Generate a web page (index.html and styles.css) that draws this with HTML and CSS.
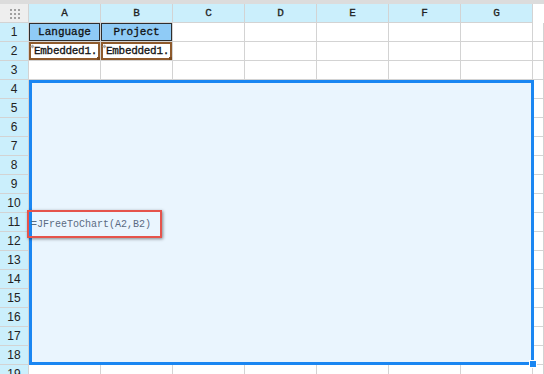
FILE: index.html
```html
<!DOCTYPE html>
<html lang="en">
<head>
    <meta charset="UTF-8">
    <title>Sheet</title>
    <link rel="stylesheet" href="styles.css">
</head>
<body>
    <div class="topbar"></div>
    <div class="sheet">
        <div class="corner">
            <svg width="10" height="10" viewBox="0 0 10 10">
                <g fill="#a0a0a0">
                    <rect x="0" y="0" width="2" height="2"/><rect x="4" y="0" width="2" height="2"/><rect x="8" y="0" width="2" height="2"/>
                    <rect x="0" y="4" width="2" height="2"/><rect x="4" y="4" width="2" height="2"/><rect x="8" y="4" width="2" height="2"/>
                    <rect x="0" y="8" width="2" height="2"/><rect x="4" y="8" width="2" height="2"/><rect x="8" y="8" width="2" height="2"/>
                </g>
            </svg>
        </div>
        <div class="col-head">A</div>
        <div class="col-head">B</div>
        <div class="col-head">C</div>
        <div class="col-head">D</div>
        <div class="col-head">E</div>
        <div class="col-head">F</div>
        <div class="col-head">G</div>
        <div class="blank"></div>

        <div class="row-head">1</div>
        <div class="cell title">Language</div>
        <div class="cell title">Project</div>
        <div class="cell"></div><div class="cell"></div><div class="cell"></div><div class="cell"></div><div class="cell"></div><div class="cell"></div>

        <div class="row-head">2</div>
        <div class="cell embed">Embedded1.</div>
        <div class="cell embed">Embedded1.</div>
        <div class="cell"></div><div class="cell"></div><div class="cell"></div><div class="cell"></div><div class="cell"></div><div class="cell"></div>
    </div>
    <div class="sheet" id="rows"></div>

    <div class="selection"><span class="handle"></span></div>
    <div class="formula">=JFreeToChart(A2,B2)</div>

    <script src="script.js"></script>
</body>
</html>
```

FILE: script.js
```js
var rows = document.getElementById('rows');
for (var r = 3; r <= 19; r++) {
    var html = '<div class="row-head">' + r + '</div>';
    for (var c = 0; c < 8; c++) html += '<div class="cell"></div>';
    rows.insertAdjacentHTML('beforeend', html);
}
```

FILE: styles.css
```css
body {
    margin: 0;
    width: 544px;
    height: 374px;
    overflow: hidden;
    background: #fff;
    position: relative;
    font-family: "Liberation Mono", monospace;
}
.topbar {
    height: 4px;
    background: #dcdcdc;
}
.sheet {
    display: grid;
    grid-template-columns: 29px repeat(7, 72px) 1fr;
    grid-auto-rows: 19px;
}
.sheet > div {
    box-sizing: border-box;
    border-right: 1px solid #d3d3d3;
    border-bottom: 1px solid #d3d3d3;
}
.corner {
    background: #eeeeee;
    display: flex;
    align-items: center;
    justify-content: center;
    padding-left: 2px;
    padding-top: 2px;
}
.col-head {
    background: #cbeffc;
    font-size: 11px;
    color: #222;
    display: flex;
    align-items: center;
    justify-content: center;
    -webkit-text-stroke: 0.3px #222;
}
.sheet > .blank {
    border: none;
}
.row-head {
    background: #cbeffc;
    font-family: "Liberation Sans", Arial, sans-serif;
    font-size: 12px;
    color: #222;
    display: flex;
    align-items: center;
    justify-content: center;
}
.cell {
    font-size: 11px;
    color: #111;
    display: flex;
    align-items: center;
    justify-content: center;
    position: relative;
}
.title {
    background: #8fcbf6;
    box-shadow: inset 0 0 0 1px #2e2e2e;
    -webkit-text-stroke: 0.3px #111;
}
.embed {
    box-shadow: inset 0 0 0 2px #8e5a2c;
    justify-content: flex-start;
    padding-left: 5px;
    letter-spacing: -0.3px;
    -webkit-text-stroke: 0.3px #111;
}
.embed::before {
    content: "";
    position: absolute;
    left: 2px;
    top: 3px;
    width: 3px;
    height: 3px;
    background: #a8a8a8;
    transform: rotate(45deg);
}
.embed::after {
    content: "";
    position: absolute;
    right: 0;
    bottom: 0;
    width: 3px;
    height: 3px;
    background: #7a4a20;
}
.selection {
    position: absolute;
    left: 29px;
    top: 80px;
    width: 505px;
    height: 285px;
    box-sizing: border-box;
    border: 3px solid #1a86f2;
    background: #eaf5fe;
}
.handle {
    position: absolute;
    right: -6px;
    bottom: -6px;
    width: 6px;
    height: 6px;
    background: #1a86f2;
    border: 1px solid #fff;
}
.formula {
    position: absolute;
    left: 27px;
    top: 210px;
    width: 135px;
    height: 28px;
    box-sizing: border-box;
    border: 2px solid #e5534b;
    box-shadow: 1px 1px 3px rgba(0, 0, 0, 0.45);
    font-size: 10px;
    color: #5b6b82;
    display: flex;
    align-items: center;
    padding-left: 2px;
}
```
